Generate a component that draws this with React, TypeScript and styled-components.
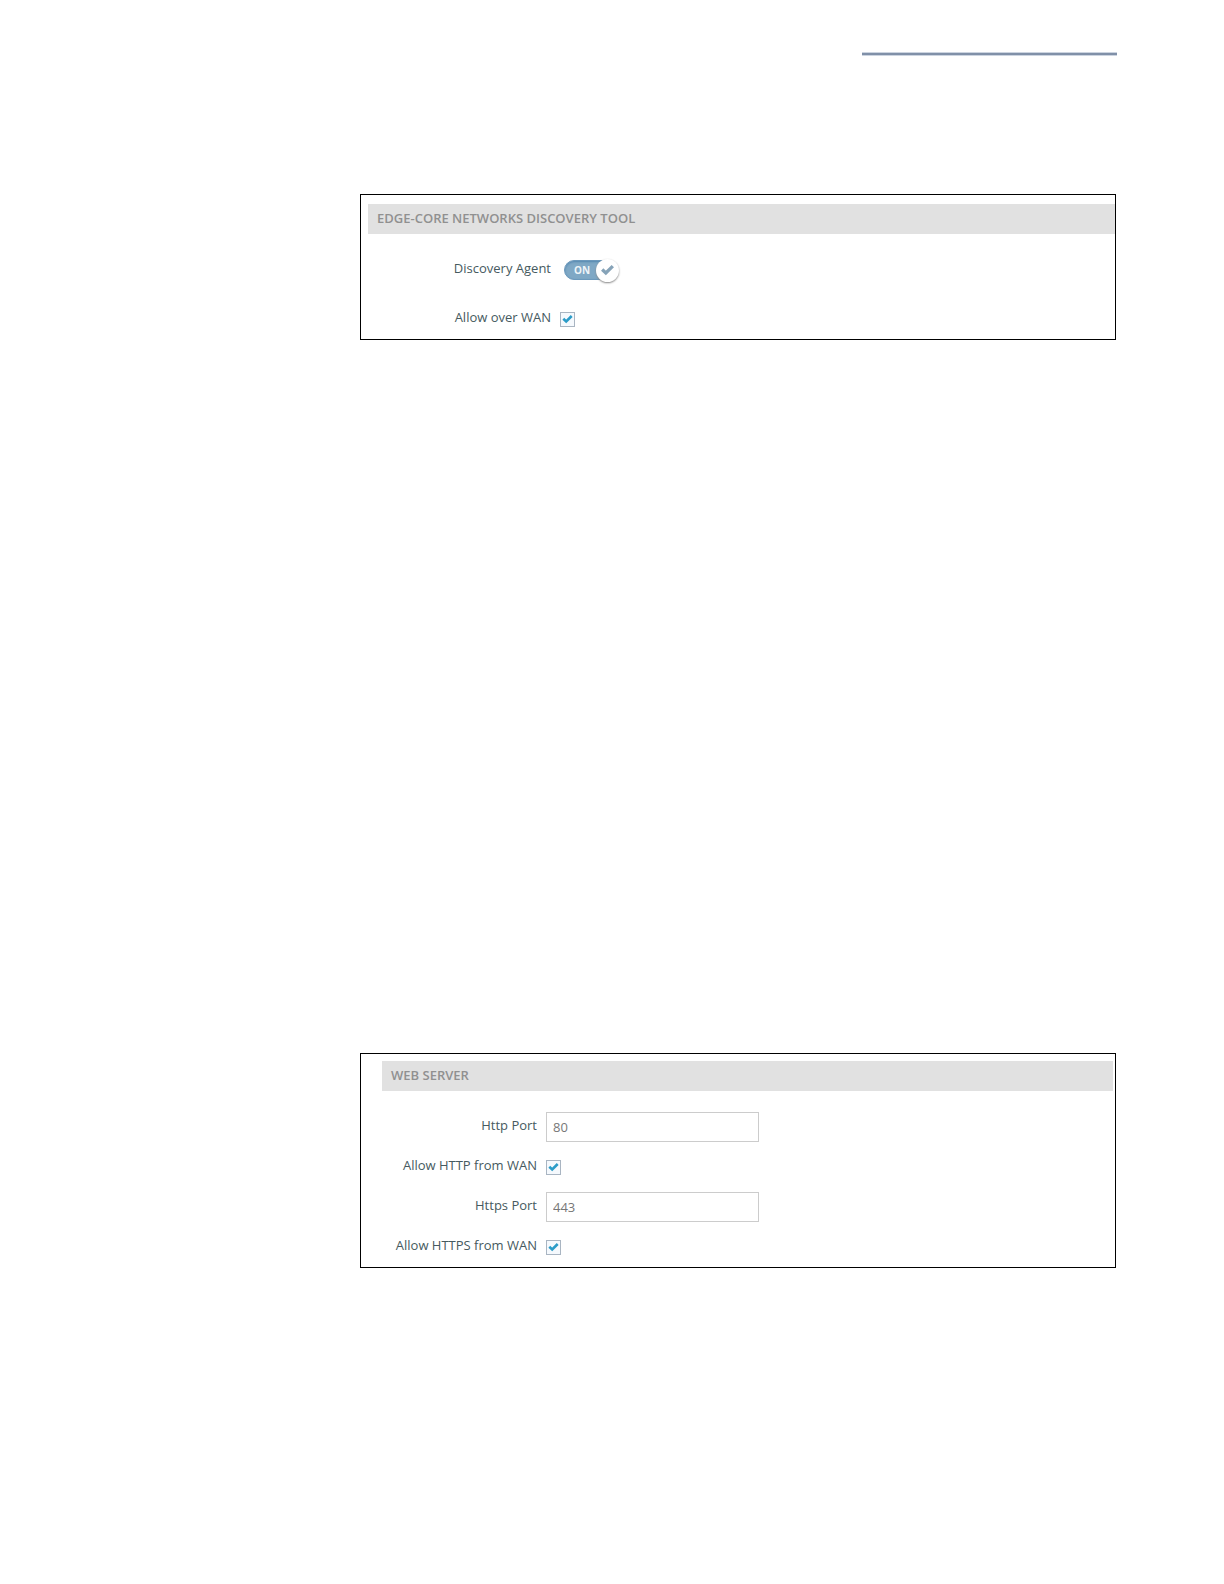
import React, { useId } from "react";
import styled, { createGlobalStyle } from "styled-components";

const GlobalStyle = createGlobalStyle`
  *, *::before, *::after { box-sizing: border-box; }
  body {
    margin: 0;
    background: #ffffff;
    font-family: "Open Sans", "Noto Sans", sans-serif;
    font-size: 13px;
    line-height: 20px;
    color: #465a60;
  }
`;

const Page = styled.main`
  display: flex;
  flex-direction: column;
  padding: 52px 108px 48px 360px;
`;

const HeaderRule = styled.hr`
  width: 255px;
  height: 4px;
  margin: 0 -1px 138px auto;
  border: solid #ccd4e0;
  border-width: 1px 0;
  background: #8090a8;
`;

const Panel = styled.section<{ $inset: number; $end: number; $top: number }>`
  border: 1px solid #000000;
  padding: ${(p) => p.$top}px ${(p) => p.$end}px 5px ${(p) => p.$inset}px;

  & + & {
    margin-top: 713px;
  }
`;

const PanelTitle = styled.h2`
  margin: 0;
  padding: 0 9px 2px;
  background: #e1e1e1;
  color: #909090;
  font-size: 13px;
  font-weight: 600;
  line-height: 28px;
`;

const Rows = styled.form<{ $label: number; $gap: number }>`
  display: grid;
  grid-template-columns: ${(p) => p.$label}px 1fr;
  grid-auto-rows: 30px;
  gap: ${(p) => p.$gap}px 9px;
  padding-top: 21px;
`;

const Label = styled.label`
  text-align: right;
  line-height: 26px;
`;

const Control = styled.div`
  display: flex;
  align-items: center;
`;

const TextInput = styled.input`
  width: 213px;
  height: 30px;
  padding: 0 6px;
  border: 1px solid #cccccc;
  background: #ffffff;
  color: #777777;
  font: inherit;
  outline-color: #7fa9c8;
`;

const TickBox = styled.span`
  display: grid;
  width: 15px;
  height: 15px;

  & > * {
    grid-area: 1 / 1;
  }
`;

const TickInput = styled.input`
  appearance: none;
  width: 15px;
  height: 15px;
  margin: 0;
  border: 1px solid #a9b5c2;
  background: #f5f9fd;

  & + svg {
    visibility: hidden;
    pointer-events: none;
  }
  &:checked + svg {
    visibility: visible;
  }
`;

const Switch = styled.span`
  display: grid;
  align-items: center;
  width: 55px;
  height: 24px;
  margin-left: 4px;

  & > * {
    grid-area: 1 / 1;
  }
`;

const SwitchInput = styled.input`
  appearance: none;
  width: 50px;
  height: 20px;
  margin: 0;
  border: 1px solid #6c99bc;
  border-radius: 10px;
  background: #bbbbbb;
  box-shadow: inset 0 1px 2px #5588b0;

  &:checked {
    background: #7fa8c5;
  }
`;

const SwitchText = styled.span`
  padding-left: 10px;
  color: #eef4f8;
  font-size: 10px;
  font-weight: 700;
  line-height: 20px;
  pointer-events: none;
`;

const Knob = styled.span`
  display: flex;
  align-items: center;
  justify-content: center;
  justify-self: end;
  width: 23px;
  height: 23px;
  border-radius: 50%;
  background: #ffffff;
  box-shadow: 0 1px 2px #888888;
  pointer-events: none;
`;

function Tick({ size, color }: { size: number; color: string }) {
  return (
    <svg width={size} height={size} viewBox="0 0 15 15" fill="none" aria-hidden="true">
      <path d="M3.3 6.7 6.2 9.5 11.7 4" stroke={color} strokeWidth="2.6" />
    </svg>
  );
}

function PortField({ label, value }: { label: string; value: string }) {
  const id = useId();
  return (
    <>
      <Label htmlFor={id}>{label}</Label>
      <Control>
        <TextInput id={id} type="text" inputMode="numeric" defaultValue={value} />
      </Control>
    </>
  );
}

function TickField({ label }: { label: string }) {
  const id = useId();
  return (
    <>
      <Label htmlFor={id}>{label}</Label>
      <Control>
        <TickBox>
          <TickInput id={id} type="checkbox" defaultChecked />
          <Tick size={15} color="#2b9cc8" />
        </TickBox>
      </Control>
    </>
  );
}

function SwitchField({ label }: { label: string }) {
  const id = useId();
  return (
    <>
      <Label htmlFor={id}>{label}</Label>
      <Control>
        <Switch>
          <SwitchInput id={id} type="checkbox" role="switch" defaultChecked />
          <SwitchText aria-hidden="true">ON</SwitchText>
          <Knob>
            <Tick size={19} color="#86a3b8" />
          </Knob>
        </Switch>
      </Control>
    </>
  );
}

export default function App() {
  return (
    <>
      <GlobalStyle />
      <Page>
        <HeaderRule />
        <Panel $inset={7} $end={0} $top={9}>
          <PanelTitle>EDGE-CORE NETWORKS DISCOVERY TOOL</PanelTitle>
          <Rows $label={183} $gap={19}>
            <SwitchField label="Discovery Agent" />
            <TickField label="Allow over WAN" />
          </Rows>
        </Panel>
        <Panel $inset={21} $end={2} $top={7}>
          <PanelTitle>WEB SERVER</PanelTitle>
          <Rows $label={155} $gap={10}>
            <PortField label="Http Port" value="80" />
            <TickField label="Allow HTTP from WAN" />
            <PortField label="Https Port" value="443" />
            <TickField label="Allow HTTPS from WAN" />
          </Rows>
        </Panel>
      </Page>
    </>
  );
}
